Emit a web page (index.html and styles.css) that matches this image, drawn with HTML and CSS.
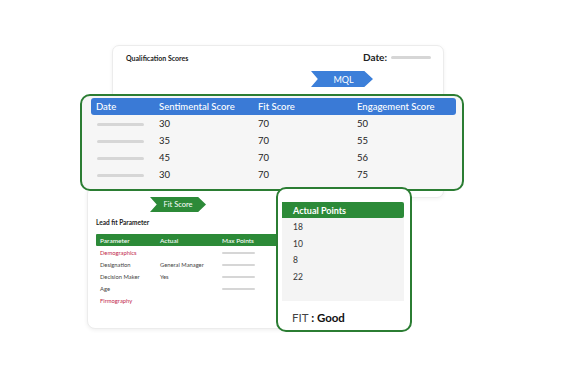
FILE: index.html
```html
<!DOCTYPE html>
<html>
<head>
<meta charset="utf-8">
<link rel="stylesheet" href="styles.css">
</head>
<body>
<div class="stage">
  <div class="card back-top">
    <div class="bt-head">
      <span class="bt-title">Qualification Scores</span>
      <span class="bt-date">Date: <i class="bar date-bar"></i></span>
    </div>
    <div class="tag tag-blue mql">MQL</div>
  </div>

  <div class="card back-bottom">
    <div class="tag tag-green fit">Fit Score</div>
    <div class="lf-title">Lead fit Parameter</div>
    <div class="lf-table">
      <div class="lf-row lf-head"><span>Parameter</span><span>Actual</span><span>Max Points</span></div>
      <div class="lf-row"><span class="red">Demographics</span><span></span><span><i class="bar mp"></i></span></div>
      <div class="lf-row"><span>Designation</span><span>General Manager</span><span><i class="bar mp"></i></span></div>
      <div class="lf-row"><span>Decision Maker</span><span>Yes</span><span><i class="bar mp"></i></span></div>
      <div class="lf-row"><span>Age</span><span></span><span><i class="bar mp"></i></span></div>
      <div class="lf-row"><span class="red">Firmography</span><span></span><span></span></div>
    </div>
  </div>

  <div class="card score-card">
    <div class="sc-row sc-head"><span>Date</span><span>Sentimental Score</span><span>Fit Score</span><span>Engagement Score</span></div>
    <div class="sc-row"><span><i class="bar db"></i></span><span>30</span><span>70</span><span>50</span></div>
    <div class="sc-row"><span><i class="bar db"></i></span><span>35</span><span>70</span><span>55</span></div>
    <div class="sc-row"><span><i class="bar db"></i></span><span>45</span><span>70</span><span>56</span></div>
    <div class="sc-row"><span><i class="bar db"></i></span><span>30</span><span>70</span><span>75</span></div>
  </div>

  <div class="card points-card">
    <div class="pc-inner">
      <div class="pc-head">Actual Points</div>
      <div class="pc-body">
        <div class="pc-row">18</div>
        <div class="pc-row">10</div>
        <div class="pc-row">8</div>
        <div class="pc-row">22</div>
      </div>
    </div>
    <div class="pc-fit">FIT <b>: Good</b></div>
  </div>
</div>
</body>
</html>
```
FILE: styles.css
```css
* { box-sizing: border-box; margin: 0; padding: 0; }
html, body { background: #fff; }
body { width: 572px; height: 369px; overflow: hidden; font-family: Lato, "Open Sans", sans-serif; color: #333; }
.stage { position: relative; width: 572px; height: 369px; }
.card { position: absolute; background: #fff; }
i { display: inline-block; font-style: normal; }
.bar { height: 3px; border-radius: 2px; background: #d6d6d6; filter: blur(0.4px); }

.back-top { left: 112px; top: 45px; width: 332px; height: 153px; border: 1px solid #ececec; border-radius: 7px; box-shadow: 0 1px 4px rgba(0,0,0,0.06); padding: 6px 12px 0 13px; }
.bt-head { display: flex; justify-content: space-between; align-items: center; height: 10px; }
.bt-title { font-size: 7px; font-weight: 700; color: #222; margin-top: 1px; }
.bt-date { font-size: 10px; font-weight: 700; color: #222; display: flex; align-items: center; gap: 4px; }
.date-bar { width: 40px; height: 3px; }

.tag { position: absolute; color: #fff; display: flex; align-items: center; justify-content: center; }
.tag-blue { background: #3c7fd9; }
.tag-green { background: #2c8a38; }
.mql { left: 198px; top: 25px; width: 62px; height: 16px; font-size: 9px; clip-path: polygon(0 0, 86% 0, 100% 50%, 86% 100%, 0 100%, 11% 50%); padding-left: 3px; }
.fit { left: 62px; top: 10px; width: 56px; height: 15px; font-size: 7.5px; clip-path: polygon(0 0, 86% 0, 100% 50%, 86% 100%, 0 100%, 12% 50%); }

.back-bottom { left: 87px; top: 186px; width: 210px; height: 143px; border: 1px solid #ececec; border-radius: 8px; box-shadow: 0 1px 4px rgba(0,0,0,0.07); padding: 32px 0 0 8px; }
.lf-title { font-size: 6.5px; font-weight: 700; color: #222; height: 12px; }
.lf-table { margin-top: 3px; }
.lf-row { display: grid; grid-template-columns: 60px 62px 1fr; height: 12px; align-items: center; padding-left: 4px; font-size: 5.8px; color: #444; }
.lf-head { background: #2c8a38; color: #fff; font-size: 6.5px; font-weight: 500; height: 12px; border-radius: 1px; }
.lf-row .red { color: #c2264b; }
.mp { width: 33px; height: 2.5px; vertical-align: middle; }

.score-card { left: 80px; top: 94px; width: 384px; height: 97px; border: 2px solid #2b7d33; border-radius: 10px; background: #f6f6f6; padding: 2px 6px 0 9px; }
.sc-row { display: grid; grid-template-columns: 63px 99px 99px 1fr; height: 17px; align-items: center; padding-left: 5px; font-size: 9.5px; color: #222; }
.sc-head { background: #3a7ad6; color: #fff; border-radius: 3px; font-weight: 500; }
.db { width: 47px; height: 3px; vertical-align: middle; margin-left: 1px; }

.points-card { left: 276px; top: 187px; width: 136px; height: 145px; border: 2px solid #2b7d33; border-radius: 10px; background: #fff; display: flex; flex-direction: column; }
.pc-inner { margin: 13px 6px 0 4px; background: #f4f4f4; height: 99px; }
.pc-head { background: #2c8a38; color: #fff; font-size: 9px; font-weight: 700; height: 16px; display: flex; align-items: center; padding-left: 11px; border-radius: 0 2px 2px 0; }
.pc-row { font-size: 8.5px; height: 16.5px; display: flex; align-items: center; padding-left: 11px; color: #333; }
.pc-row:first-child { margin-top: 1px; }
.pc-fit { padding: 10px 0 0 14px; font-size: 11.5px; color: #444; }
.pc-fit b { color: #111; font-weight: 700; }
```
